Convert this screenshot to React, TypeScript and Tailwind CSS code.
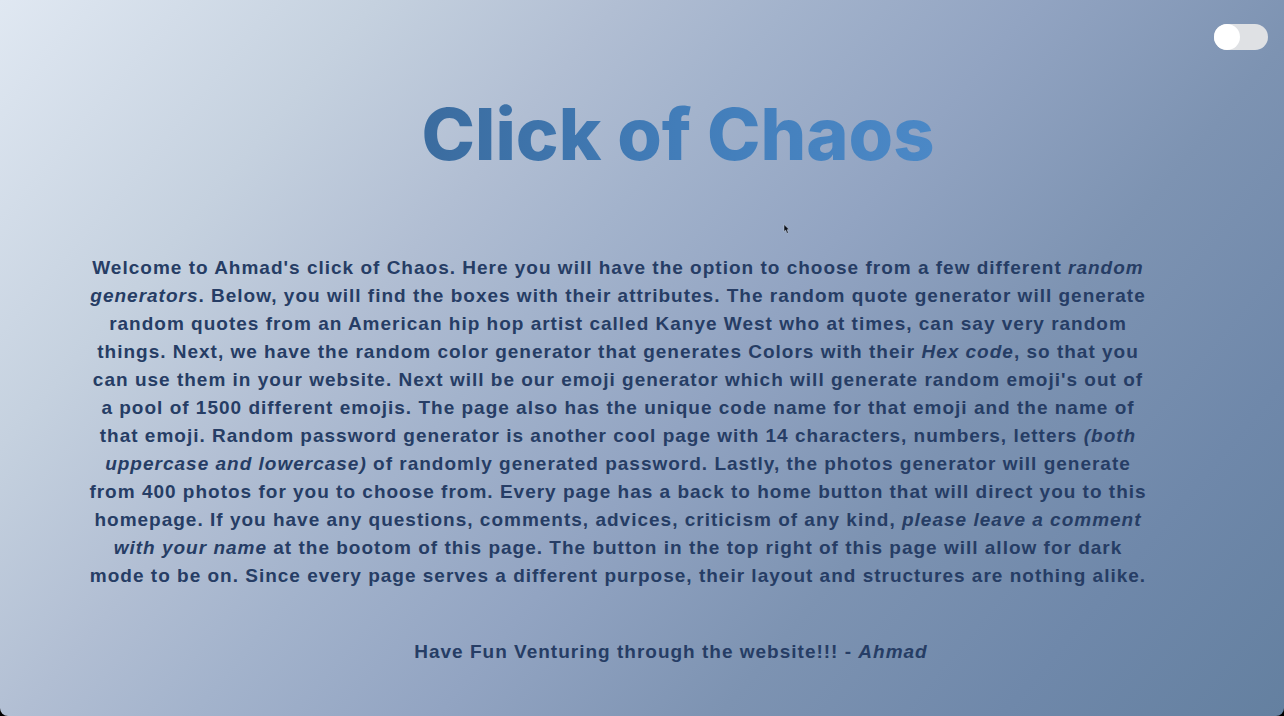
import { useState } from "react";

export default function App() {
  const [dark, setDark] = useState(false);

  return (
    <div className="flex min-h-screen flex-col bg-black">
      <div
        className={`flex grow flex-col overflow-hidden rounded-b-[8px] font-['Liberation_Sans',Arial,sans-serif] ${
          dark
            ? "bg-[#101b2e]"
            : "bg-[linear-gradient(130deg,#e0e8f2_0%,#c5d1df_20%,#b1bed3_33%,#a3b3cc_42%,#92a4c2_55%,#7d93b2_70%,#6f88aa_85%,#6480a0_100%)]"
        }`}
      >
        <header className="flex justify-end px-4 pt-6">
          <label className="relative flex h-[26px] w-[54px] cursor-pointer items-center">
            <input
              type="checkbox"
              role="switch"
              aria-label="Dark mode"
              checked={dark}
              onChange={(e) => setDark(e.target.checked)}
              className="peer h-full w-full cursor-pointer appearance-none rounded-full bg-[#dfe1e4]"
            />
            <span className="pointer-events-none absolute left-0 size-[26px] rounded-full bg-white peer-checked:left-7" />
          </label>
        </header>

        <main className="flex flex-col items-center">
          <h1 className="mt-12 ml-[72px] bg-linear-to-r from-[#3b6c9f] via-[#427db9] to-[#4b88c6] bg-clip-text font-[Inter,sans-serif] text-[72px] leading-[72px] font-extrabold text-transparent">
            Click of Chaos
          </h1>

          <div
            className={`mt-[84px] text-center text-[19px] leading-7 font-bold tracking-[1px] ${
              dark ? "text-[#c8d3df]" : "text-[#263d65]"
            }`}
          >
            <p className="mr-12 max-w-[1068px]">
              Welcome to Ahmad's click of Chaos. Here you will have the option to choose from a few
              different <em>random generators</em>. Below, you will find the boxes with their
              attributes. The random quote generator will generate random quotes from an American
              hip hop artist called Kanye West who at times, can say very random things. Next, we
              have the random color generator that generates Colors with their <em>Hex code</em>, so
              that you can use them in your website. Next will be our emoji generator which will
              generate random emoji's out of a pool of 1500 different emojis. The page also has the
              unique code name for that emoji and the name of that emoji. Random password generator
              is another cool page with 14 characters, numbers, letters{" "}
              <em>(both uppercase and lowercase)</em> of randomly generated password. Lastly, the
              photos generator will generate from 400 photos for you to choose from. Every page has
              a back to home button that will direct you to this homepage. If you have any
              questions, comments, advices, criticism of any kind,{" "}
              <em>please leave a comment with your name</em> at the bootom of this page. The button
              in the top right of this page will allow for dark mode to be on. Since every page
              serves a different purpose, their layout and structures are nothing alike.
            </p>
            <p className="mt-12 ml-[58px]">
              Have Fun Venturing through the website!!! - <em>Ahmad</em>
            </p>
          </div>
        </main>
      </div>

      <svg
        className="pointer-events-none absolute top-[224px] left-[783px]"
        width="8"
        height="12"
        viewBox="0 0 8 12"
        aria-hidden="true"
      >
        <path d="M1 .5v7l1.7-1.4 1.2 3.2 1.4-.6-1.2-3 2-.2z" fill="#0b0f18" stroke="#c5d0df" strokeWidth=".5" />
      </svg>
    </div>
  );
}
